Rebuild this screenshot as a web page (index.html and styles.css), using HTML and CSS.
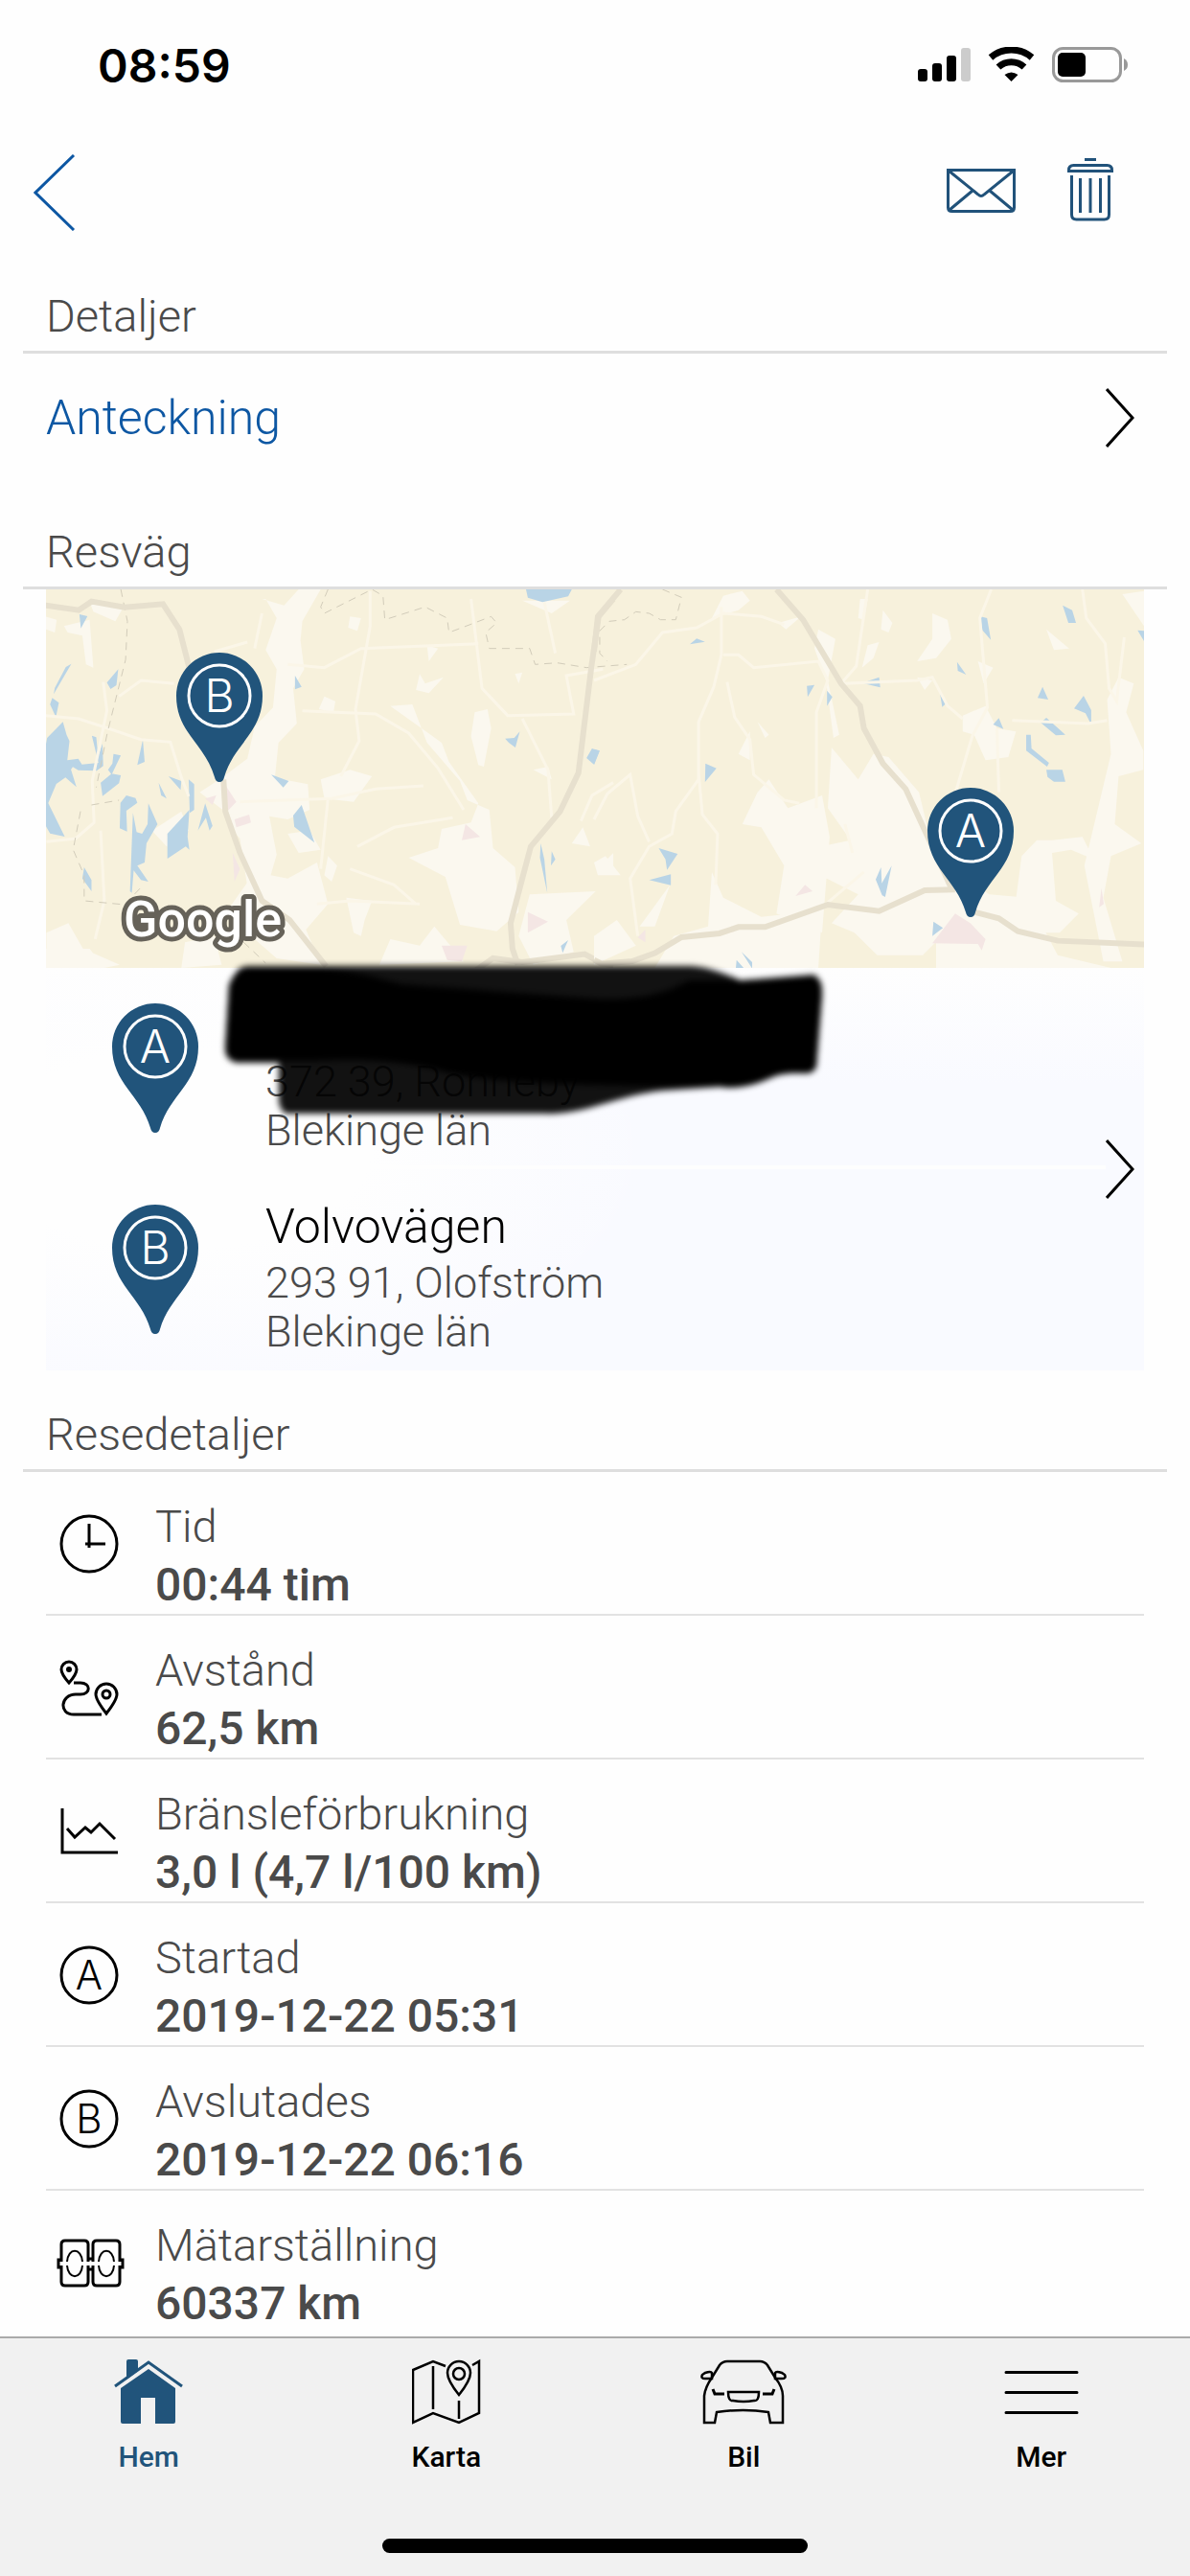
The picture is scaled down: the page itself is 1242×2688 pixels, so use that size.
FILE: index.html
```html
<!DOCTYPE html>
<html lang="sv">
<head>
  <meta charset="UTF-8">
  <meta name="viewport" content="width=device-width, initial-scale=1.0">
  <title>Resedetaljer</title>
  <link rel="stylesheet" href="styles.css">
</head>
<body>
  <div class="statusbar">
    <span class="time">08:59</span>
    <svg class="status-icons" width="220" height="38" viewBox="0 0 220 38">
      <rect x="0" y="23" width="10" height="13" rx="3"/>
      <rect x="15" y="17" width="10" height="19" rx="3"/>
      <rect x="30" y="9" width="10" height="27" rx="3"/>
      <rect x="45" y="1" width="10" height="35" rx="3" fill="#ccc"/>
      <path d="M76 11a33 33 0 0 1 43 0" fill="none" stroke="#000" stroke-width="7"/>
      <path d="M84 21a20 20 0 0 1 27 0" fill="none" stroke="#000" stroke-width="7"/>
      <path d="M97.500 36l-7-7q7-5 14 0z"/>
      <rect x="141.500" y="1.500" width="70" height="34" rx="10" fill="none" stroke="#999" stroke-width="3"/>
      <rect x="146" y="6" width="29" height="25" rx="5"/>
      <path d="M215 12q4 2 4 6.500t-4 6.500z" fill="#999"/>
    </svg>
  </div>

  <header class="navbar">
    <button class="icon-btn back" aria-label="Tillbaka">
      <svg width="44" height="80" viewBox="0 0 44 80" fill="none" stroke="#0d57a3" stroke-width="3"><path d="M42 1L2 40l40 39"/></svg>
    </button>
    <div class="nav-actions">
      <button class="icon-btn" aria-label="Skicka">
        <svg width="72" height="68" viewBox="0 0 72 68" fill="none" stroke="#21527a" stroke-width="3">
          <path d="M1.500 13.500h69v39q0 4-4 4h-61q-4 0-4-4z"/>
          <path d="M2 14l31 25q3 3 6 0l31-25M3 55l24-20M69 55L45 35"/>
        </svg>
      </button>
      <button class="icon-btn" aria-label="Ta bort">
        <svg width="48" height="68" viewBox="0 0 48 68" fill="none" stroke="#21527a" stroke-width="3">
          <path d="M18 2.500h12M1.500 14.500v-1q0-5 5-5h35q5 0 5 5v1z"/>
          <path d="M4.500 19v41q0 5 5 5h29q5 0 5-5V19M13.500 22v36M24 22v36M34.500 22v36"/>
        </svg>
      </button>
    </div>
  </header>

  <main class="content">
    <h2 class="section-title">Detaljer</h2>
    <a class="note-link" href="#">
      Anteckning
      <svg class="chevron" width="30" height="64" viewBox="0 0 30 64"><path d="M1 2l27 30L1 62"/></svg>
    </a>

    <h2 class="section-title">Resväg</h2>
    <a class="route" href="#">
      <svg class="map" viewBox="0 0 1146 395" preserveAspectRatio="xMidYMid slice">
        <defs>
          <g id="pin-shape">
            <path d="M45 135q-4 0-5-5C30 95 0 84 0 45a45 45 0 0 1 90 0C90 84 60 95 50 130q-1 5-5 5z" fill="#21547b"/>
            <circle cx="45" cy="45" r="32" fill="none" stroke="#fff" stroke-width="3"/>
          </g>
        </defs>
        <rect width="1146" height="395" fill="#f7f1dc"/>

        <!-- western half -->
        <g transform="translate(-8 -15) scale(.3827 .3333)">
          <g class="land">
            <path d="M610 75l60 20 40-50h60l-50 100-5 60 10 90-30 60 10 110-50 60-10 110 90 20 5 80-60 30-50-10 20 120-20 80-60 20-20-150-30-40-20-150 70-60 20-100 50-60 10-120-30-60 30-100-30-60z"/>
            <path d="M20 130l30 10-5 40-25-10zM70 160l70-20 10 150-20-10-10-90-40-10zM140 85l90 20-20 40-60-30z"/>
            <path d="M770 640l80-30 60 20-50 80-80-10zM850 130l30 5-10 40-25-10zM780 380l30 15-5 35-40-10z"/>
            <path d="M960 410l60-5 40 120 90 120 20 60 60 30 10 120 60 60 10 140-60 60-100-20-40-150-100-60 80-30 10-60 80-20 20-60-80-130-20-60z"/>
            <path d="M1190 430l35-10 10 60-20 120-15-5-20-90zM1040 310l15 30 50-20-40 50-35-10zM1060 220l30 10-25 40zM1300 310l20-5-10 35z"/>
            <path d="M590 930l90 20 80-50 30 130-60 80 40 110-120-20-80-80-60-60zM840 1010l70 10-20 60-10 50-20-10zM790 880l25 30-15 50-20-20z"/>
            <path d="M930 1220l30-80 80 20 40-60 80 110zM1340 1000l180-10-80 90 20 100-110 40-40-90zM1525 920l43-50v70zM1455 840l30-50 20 60z"/>
            <path d="M22 1120l60-30 40 80 100 50-50 12H22zM400 1150l80-20 20 90-110 10zM20 1170h120l40 60H20zM1320 80l130 0-50 40zM680 810l60-10 30 60-60 10z"/>
            <path d="M440 680l80-60 90 60-10 60-80 10zM310 800l80-60 20 60-60 50zM1350 610l40-10 10 40z"/>
          </g>
          <g class="water">
            <path d="M1330 45h125l-10 22-70 18-40-14zM112 123l22 6-18 38zM90 278l-15 10-30 65-3 20zM38 385l18 15-8 45-16-40zM218 295l-5 50-16 12-10-20zM700 315l18 35-18 8z"/>
            <path d="M67 460l10 40 8 20-6 60 30-5 10 18 45-5-18-85 12 5 5 60 12-40 2 70-18 15-50-2-15-10-5 8 15 55-30-30-25 20-22 60 45 105-40-10-20-40-18 40V610l20-40 10-60z"/>
            <path d="M205 560l20 5-25 60-10-15 12-20zM285 515l5 70-20 10zM170 650l30-28 25 5-5 25-45 40zM355 630l35 15-2 28zM328 650l22 50-15-10zM410 640l15 15v80l-12 10zM240 690l25 8 5 15-30 25 2 65-20-10 2-80zM300 715l25 65-30 60-5 60-20 10 30 50-20-5-20-30-5 70-5-5 8-245 10 60 15 5 15-30z"/>
            <path d="M352 810l60-75-5 85 5 40-10-10-50 38zM455 715l20 70-8 15-10-40-22 40zM125 915l20 40v35l-25-40zM635 625l48 20-15 20zM718 720l35 118-55-50-3-35zM1273 512l25-2 15-20-12 50-18-15zM1510 543l20 8-15 42-20-20zM1370 840l10 50 8 105-20-110zM1400 865l10 25-12 20zM1445 1143l-15 40-5-22z"/>
          </g>
          <g class="urban">
            <path d="M500 640l40 70-25 30zM535 765l40-15 5 25-40 15zM530 870l20 50-15 40zM1155 830l10-50 40 40zM1335 1055l55 30-55 35zM1100 1160h70l-15 50-40-5zM455 700l30-10-10 30z"/>
          </g>
          <g class="lane">
            <path d="M20 440l90 10 80 30 90 35 80 8 30 110 20 60M22 835l80-10 50-50-5-130 40-220-10-90M905 50v110l-40 260 10 100-50 110M1180 75l30 280 70 85 180-5-20-120 100-20M720 425l200 10 90 60 80 110 70 130M550 710l250-10 120-30 130-10M760 1030l90-10 190 10M220 380l60-50 90 10M590 230l20-110M790 700l-20 220M480 240l90-30M680 280l100 10 100-60 320-15M1380 85l30 160M1320 450l70 160 10 150M870 850l100-60 160-30M1480 770l30-80 58-40M155 1140l25-120-10-220M850 920l120 50 60 60"/>
          </g>
          <g class="border">
            <path d="M225 45l18 100-5 120-50 230-30 170M145 720l75-15M115 740l-20 120 30 80v80l110 12 50-60M790 45l-20 55 10 20 130-75 30 20 5 75 110-40 60 35 5 45 35-15 80-35 15 20-30 30 10 50 110 0 15 50 60-5 80 15 110-10M560 1150l60 65"/>
          </g>
          <g class="road">
            <path d="M20 95l90 15 35-27 90 18 105-10 45 80 40 180"/>
            <path d="M505 640l5 100 40 130 60 150 75 60 100 145M1568 75l-40 55-20 160-35 330-50 120-80 110-30 130-25 110 5 80 15 50"/>
            <path d="M1190 1240l50-40 80 12 170-25 50 30 28 5"/>
          </g>
        </g>

        <!-- eastern half -->
        <g transform="translate(572 -15) scale(.3967 .3333)">
          <g class="land">
            <path d="M340 65l50-15 20 30-30 30-70 25zM485 150l60-20-40 40zM590 170l45 30-20 130 30 170-15 10-20-180-30-100zM700 75h20l-10 65-15-5zM760 110l25 40-10 30-20-10zM890 120l40 20 10 60-40 60-50 10 40-70zM720 220l30-10-15 50-30 30zM1190 170l60 60-40 5z"/>
            <path d="M625 540l70 100 40-80 40 10 80 110 40 200 50 120-30 130-50 60-120 0-60-70-60-30 70-90-100-60-40-80 120-30-60-100zM430 680l30-40 50 90 90-40 20 130-20 300-120-60 20-150-60-120-50-10z"/>
            <path d="M310 930l30 80 100 60 160-20-10 180H160l50-100 90-30zM0 900l30-20 40 60H10zM0 1130l60-50 50 80-110 60zM120 1100l80-130-40 130zM380 560l30-70v90z"/>
            <path d="M970 440l60-30 30 70 50 10-20 80-60 10-30-80-30-10zM1350 390l30-70 40 20-20 90 45 120v60l-65 20-10 150 70 60-80 40-20 130 50 200h-50l-50-300 20-100 50-250zM1390 60l57-10v110z"/>
            <path d="M1125 880l40-50 40 0 80-10 30 70-60-30-50 10 10 150 60 40-50 60-80 0-40-60zM900 1000l60-60 80 60 100 10 80 180 140 40H900zM430 460l30 40-10 10zM830 510l20 40zM850 320l40 10-20 30zM1010 270l40 20-25 50zM570 880l250-30 80 50-60 50-110 40-60-60z"/>
          </g>
          <g class="water">
            <path d="M0 545l15 5-15 45zM252 217l18-18 22 10zM560 347l20-3-18 38zM613 362l14 20-14 28zM293 590l29 15-30 43zM705 338l45-18 3 32zM955 272l24 40-22-12zM910 370l18 30-12 13zM1016 130l18 5 10 68-22-30zM1233 95l25 15 10 40-20 0zM1430 173l17 2v32zM1180 350l15 40-28-5zM1288 378l20 45v45l-15-35-30-15zM1190 447l50 53-25 2-40-40zM1050 468l15-20 12 34zM1137 500h12l2 43 46 45-5 12-55-50zM1190 610l42 0 8 37-30 0-17-15zM170 855l50 18-28 50-4-33zM145 955l57-18v34zM755 915l2 50 26-55-17 98-8-5-17-50zM893 1085l25 20-28 25zM375 1205l20 27h-22zM388 1180l28 32 0 20z"/>
          </g>
          <g class="urban">
            <path d="M950 1060l40 30 40 50-10 35-10-20-120-2zM530 1005l25-35 20 20zM115 1135l20-25v40zM1335 980l6 50-12 10z"/>
          </g>
          <g class="lane">
            <path d="M0 330l110-50 70-100 90-15 70-45 100 10 60 25M335 100v150l-20 100-40 110v180l-60 100-10 70-60 40-50 100 20 180M350 335l20 110 40 70 10 110 80 80 40 10M340 250l40 0 40 40 170-20 25 60-30 100v300M145 835l-30-80-20-130-60 60-35 80M275 620l10 130 40 60-5 160M720 45l-30 240-40 55 200-10 40-10 40 90 40 40M1045 45l-30 90 20 280-40 90-50 200M1100 455l200 10 50-10M1285 45l10 90 50 80 10 140 20 40 20-200M610 1030l100-100M1060 480l5 200M660 780l20 90"/>
          </g>
          <g class="border">
            <path d="M180 45l50 25-15 70h-40l-30-20-35-5-30 25-40 5-25 30v70l20 25"/>
          </g>
          <g class="road">
            <path d="M70 45L10 130 0 240M480 45l70 95 100 200 50 70 10 70 50 110 60 80 120 310"/>
            <path d="M0 1205l20 12 80-8 60-25 70-50 100-12 50-20h70l165-70 135 20 120-65 80-2M1000 1055l65 20 50 40 105 30 230 12"/>
          </g>
        </g>

        <text class="google" x="81" y="362">Google</text>
        <use href="#pin-shape" x="136" y="66"/>
        <text class="pin-letter" x="181" y="128">B</text>
        <use href="#pin-shape" x="920" y="207"/>
        <text class="pin-letter" x="965" y="269">A</text>
      </svg>

      <div class="places">
        <ul class="place-list">
          <li class="place">
            <svg class="pin" width="90" height="136" viewBox="0 0 90 136"><use href="#pin-shape"/><text class="pin-letter" x="45" y="62">A</text></svg>
            <div class="address">
              <span class="street">&nbsp;</span>
              <span>372 39, Ronneby</span>
              <span>Blekinge län</span>
            </div>
          </li>
          <li class="place">
            <svg class="pin" width="90" height="136" viewBox="0 0 90 136"><use href="#pin-shape"/><text class="pin-letter" x="45" y="62">B</text></svg>
            <div class="address">
              <span class="street">Volvovägen</span>
              <span>293 91, Olofström</span>
              <span>Blekinge län</span>
            </div>
          </li>
        </ul>
        <svg class="chevron" width="30" height="64" viewBox="0 0 30 64"><path d="M1 2l27 30L1 62"/></svg>

        <!-- marker strokes hiding the street -->
        <svg class="scribble" width="660" height="170" viewBox="0 0 660 170">
          <path d="M26 14q4-6 12-6h460q20 0 54 15l76-6q10 4 9 20l-6 76q-3 8-14 7-20-1-32 4-30 14-54 10l-60 4c-50 5-80 26-126 24H78q-6-2-8-12V109H26q-12-3-12-14l4-66q2-8 8-15z" opacity=".93"/>
          <path d="M26 16q4-6 12-6h70q30 0 90 17 110 8 200 15 60 4 100-19h54l76-4q10 4 9 20l-6 74q-3 8-14 7-20-1-32 4-30 14-54 10-90 0-160-3c-60-2-110-6-140-16-50-10-80-10-125-8H26q-12-3-12-14l4-66z"/>
        </svg>
      </div>
    </a>

    <h2 class="section-title">Resedetaljer</h2>
    <dl class="details">
      <div class="detail">
        <svg class="detail-icon" viewBox="0 0 72 72"><circle cx="36" cy="36" r="29"/><path d="M36 15v25M32 36h21"/></svg>
        <dt>Tid</dt>
        <dd>00:44 tim</dd>
      </div>
      <div class="detail">
        <svg class="detail-icon" viewBox="0 0 72 72">
          <path d="M15 31q-8-9-8-14a8 8 0 0 1 16 0q0 5-8 14z"/>
          <circle cx="15" cy="17" r="3" fill="#000" stroke="none"/>
          <path d="M20 31h7c11 0 11 12 0 12H22c-16 0-18 21-2 21h29"/>
          <path d="M54 63Q43 49 43 43a11 11 0 0 1 22 0q0 6-11 20z"/>
          <circle cx="54" cy="43" r="4"/>
        </svg>
        <dt>Avstånd</dt>
        <dd>62,5 km</dd>
      </div>
      <div class="detail">
        <svg class="detail-icon" viewBox="0 0 72 72"><path d="M8 12v46h58M13 33l8 9 11-10 6 5 9-9 16 16"/></svg>
        <dt>Bränsleförbrukning</dt>
        <dd>3,0 l (4,7 l/100 km)</dd>
      </div>
      <div class="detail">
        <svg class="detail-icon" viewBox="0 0 72 72"><circle cx="36" cy="36" r="29"/><text x="36" y="51">A</text></svg>
        <dt>Startad</dt>
        <dd>2019-12-22 05:31</dd>
      </div>
      <div class="detail">
        <svg class="detail-icon" viewBox="0 0 72 72"><circle cx="36" cy="36" r="29"/><text x="36" y="51">B</text></svg>
        <dt>Avslutades</dt>
        <dd>2019-12-22 06:16</dd>
      </div>
      <div class="detail">
        <svg class="detail-icon" viewBox="0 0 72 72">
          <path d="M7 35V17q0-4 4-4h20q4 0 4 4v18M35 39v17q0 4-4 4H11q-4 0-4-4V39M40 35V17q0-4 4-4h20q4 0 4 4v18M68 39v17q0 4-4 4H44q-4 0-4-4V39M35 32h5M35 43h5M7 33H4v8h3M68 33h3v8h-3"/>
          <path d="M13 35c1-15 15-15 16 0M13 39c1 15 15 15 16 0M46 35c1-15 15-15 16 0M46 39c1 15 15 15 16 0" stroke-width="2"/>
        </svg>
        <dt>Mätarställning</dt>
        <dd>60337 km</dd>
      </div>
    </dl>
  </main>

  <footer class="tabbar">
    <nav class="tabs">
      <a class="tab active" href="#">
        <svg width="72" height="70" viewBox="0 0 72 70">
          <path d="M13 22V3q0-2 2-2h8q2 0 2 2v10z" fill="#21547b"/>
          <path d="M1 29L36 4l35 25" fill="none" stroke="#21547b" stroke-width="3"/>
          <path d="M36 11l28 20v35q0 2-2 2H43V41H28v27H9q-2 0-2-2V31z" fill="#21547b"/>
        </svg>
        Hem
      </a>
      <a class="tab" href="#">
        <svg width="72" height="70" viewBox="0 0 72 70" fill="none" stroke="#000" stroke-width="2.500">
          <path d="M35 8L22 3 1 12v55l21-10 27 10 21-10V3l-7 4M22 8v45M49 44v19"/>
          <path d="M49 38Q37 23 37 15a12 12 0 0 1 24 0q0 8-12 23z"/>
          <circle cx="49" cy="16" r="6"/>
        </svg>
        Karta
      </a>
      <a class="tab" href="#">
        <svg width="90" height="70" viewBox="0 0 90 70" fill="none" stroke="#000" stroke-width="2.500">
          <path d="M4 67V39q1-9 8-19l8-13q3-4 8-4h34q5 0 8 4l8 13q8 10 8 19v28H73l-2-11q-26-4-54 0l-2 11z"/>
          <path d="M12 21H5q-5 0-3-4l3-2q6-2 7 0zM78 21h7q5 0 3-4l-3-2q-6-2-7 0z"/>
          <path d="M29 35h32q0 10-5 9-11 2-22 0-5 1-5-9z"/>
          <path d="M13 32l2 5h10M77 32l-2 5H65" stroke-width="3"/>
        </svg>
        Bil
      </a>
      <a class="tab" href="#">
        <svg width="78" height="70" viewBox="0 0 78 70" fill="none" stroke="#000" stroke-width="3" stroke-linecap="round"><path d="M2 14.500h74M2 35.500h74M2 56.500h74"/></svg>
        Mer
      </a>
    </nav>
    <div class="home-indicator"></div>
  </footer>
</body>
</html>
```

FILE: styles.css
```css
* {
  box-sizing: border-box;
}
body {
  margin: 0;
  min-height: 100vh;
  display: flex;
  flex-direction: column;
  background: #fefefe;
  color: #4a4a4a;
  font-family: Roboto, 'Liberation Sans', sans-serif;
  font-weight: 300;
  font-size: 47px;
}
a {
  color: inherit;
  text-decoration: none;
}

/* top of the screen */
.statusbar {
  display: flex;
  align-items: center;
  justify-content: space-between;
  height: 136px;
  padding: 0 64px 0 102px;
}
.time {
  font-family: Inter, 'Liberation Sans', sans-serif;
  font-weight: 600;
  font-size: 48px;
  color: #000;
}
.navbar {
  display: flex;
  align-items: center;
  justify-content: space-between;
  height: 130px;
  padding: 0 80px 0 35px;
}
.nav-actions {
  display: flex;
  gap: 54px;
  padding-bottom: 6px;
}
.icon-btn {
  display: flex;
  padding: 0;
  border: none;
  background: none;
  cursor: pointer;
}

/* sections */
.content {
  flex: 1;
}
.section-title {
  margin: 0 24px;
  padding: 34px 24px 6px;
  border-bottom: 3px solid #dedede;
  font-size: 47px;
  font-weight: 300;
  line-height: 60px;
}
.note-link {
  display: flex;
  align-items: center;
  justify-content: space-between;
  height: 134px;
  margin: 0 48px 9px;
  padding-right: 10px;
  color: #0d57a3;
  font-size: 50px;
}
.chevron {
  flex: none;
  fill: none;
  stroke: #000;
  stroke-width: 3;
}

/* route */
.route {
  display: block;
  margin: 0 48px;
}
.map {
  display: block;
  width: 100%;
  height: 395px;
}
.map path {
  vector-effect: non-scaling-stroke;
}
.land {
  fill: #fbf8ef;
}
.water {
  fill: #b9d4e6;
}
.urban {
  fill: #f4e6e4;
}
.lane {
  fill: none;
  stroke: #fbf6e8;
  stroke-width: 3;
}
.border {
  fill: none;
  stroke: #d2ccba;
  stroke-width: 1;
  stroke-dasharray: 8 6;
}
.road {
  fill: none;
  stroke: #e7e0ce;
  stroke-width: 6;
}
.google {
  font-family: Roboto, sans-serif;
  font-weight: 500;
  font-size: 52px;
  fill: #fff;
  stroke: #666259;
  stroke-width: 10;
  stroke-linejoin: round;
  paint-order: stroke;
}
.pin-letter {
  font-family: Inter, Roboto, sans-serif;
  font-weight: 300;
  font-size: 48px;
  fill: #fff;
  text-anchor: middle;
}
.places {
  position: relative;
  display: flex;
  align-items: center;
  padding-right: 10px;
  margin-bottom: 3px;
  background: radial-gradient(ellipse 500px 260px at 12% 45%, #fefefe 40%, transparent), linear-gradient(#fefefe, #f9faff 120px);
}
.place-list {
  flex: 1;
  margin: 0;
  padding: 0;
  list-style: none;
}
.place {
  display: flex;
  gap: 70px;
  padding: 27px 0 11px 69px;
  border-bottom: 4px solid #fefefe;
}
.place:last-child {
  border-bottom-color: transparent;
}
.pin {
  margin-top: 10px;
}
.address {
  display: flex;
  flex-direction: column;
  font-size: 45px;
  line-height: 51px;
}
.street {
  font-size: 50px;
  line-height: 66px;
  color: #000;
}
.scribble {
  position: absolute;
  left: 173px;
  top: -10px;
  filter: blur(3px);
}

/* trip details */
.details {
  margin: 0 48px;
}
.detail {
  display: grid;
  grid-template-columns: 90px 1fr;
  column-gap: 24px;
  padding-top: 26px;
  border-bottom: 2px solid #e2e2e2;
  line-height: 61px;
}
.detail:last-child {
  border-bottom: none;
}
.detail-icon {
  grid-row: span 2;
  align-self: center;
  justify-self: center;
  width: 72px;
  height: 72px;
  margin-top: -24px;
  overflow: visible;
  fill: none;
  stroke: #000;
  stroke-width: 3;
}
.detail-icon text {
  font-family: Inter, Roboto, sans-serif;
  font-weight: 300;
  font-size: 42px;
  fill: #000;
  stroke: none;
  text-anchor: middle;
}
.detail dd {
  margin: 0;
  font-size: 48px;
  font-weight: 500;
}

/* bottom bar */
.tabbar {
  height: 250px;
  padding-top: 21px;
  border-top: 2px solid #aaa;
  background: #f1f1f1;
}
.tabs {
  display: grid;
  grid-template-columns: repeat(4, 1fr);
}
.tab {
  display: flex;
  flex-direction: column;
  align-items: center;
  gap: 15px;
  color: #000;
  font-size: 30px;
  font-weight: 500;
  line-height: 36px;
}
.tab.active {
  color: #21547b;
}
.home-indicator {
  width: 444px;
  height: 15px;
  margin: 67px auto 0;
  border-radius: 8px;
  background: #000;
}
```
